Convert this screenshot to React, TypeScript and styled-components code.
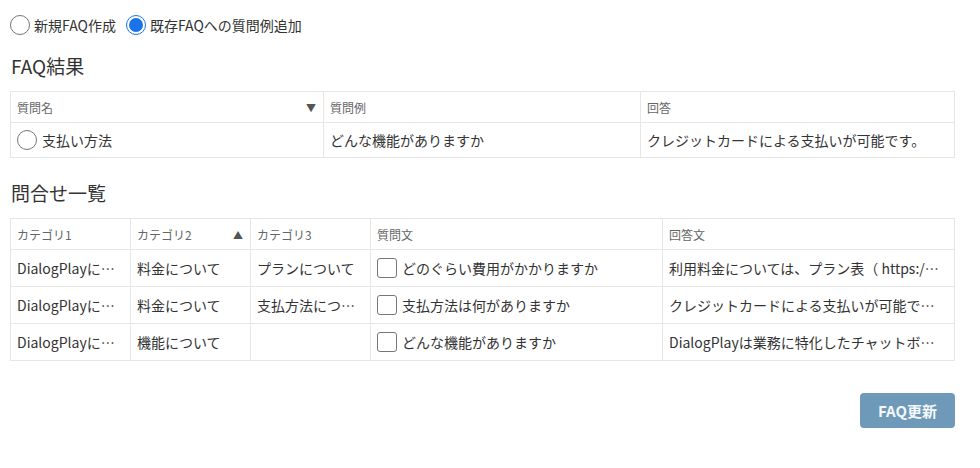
import React from 'react'
import styled, { createGlobalStyle } from 'styled-components'

const GlobalStyle = createGlobalStyle`
  body {
    margin: 0;
    background: #fff;
    font-family: "Noto Sans CJK JP", "Noto Sans", sans-serif;
    color: #333;
  }
`

const Page = styled.div`
  width: 980px;
  padding: 14px 25px 0 10px;
  box-sizing: border-box;
`

const ModeRow = styled.div`
  display: flex;
  align-items: center;
  gap: 10px;
  height: 22px;
`

const ModeOption = styled.label`
  display: flex;
  align-items: center;
  gap: 4px;
  font-size: 14px;
  color: #333;
  cursor: pointer;
`

const Radio = styled.span<{ checked?: boolean }>`
  width: 20px;
  height: 20px;
  border-radius: 50%;
  border: 1px solid ${p => (p.checked ? '#1a73e8' : '#767676')};
  box-sizing: border-box;
  background: #fff;
  display: flex;
  align-items: center;
  justify-content: center;
  flex-shrink: 0;

  ${p => p.checked && `
    &::after {
      content: '';
      width: 14px;
      height: 14px;
      border-radius: 50%;
      background: #1a73e8;
    }
  `}
`

const Heading = styled.h2<{ top: number }>`
  margin: ${p => p.top}px 0 0 1px;
  font-size: 19px;
  font-weight: 400;
  color: #333;
  line-height: 24px;
`

const Table = styled.table<{ top: number }>`
  margin-top: ${p => p.top}px;
  width: 945px;
  border-collapse: collapse;
  table-layout: fixed;
  border: 1px solid #ddd;
`

const HeadCell = styled.th`
  height: 30px;
  padding: 0 7px 0 6px;
  border: 1px solid #e6e6e6;
  font-size: 12px;
  font-weight: 400;
  color: #666;
  text-align: left;
  white-space: nowrap;
`

const HeadInner = styled.div`
  display: flex;
  align-items: center;
  justify-content: space-between;
`

const SortMark = styled.span`
  font-size: 10px;
  color: #555;
`

const Cell = styled.td<{ h: number }>`
  height: ${p => p.h}px;
  padding: 0 10px 0 6px;
  border: 1px solid #e6e6e6;
  font-size: 14px;
  color: #333;
  white-space: nowrap;
  overflow: hidden;
  text-overflow: ellipsis;
`

const CellInner = styled.div`
  display: flex;
  align-items: center;
  gap: 5px;
`

const Checkbox = styled.span`
  width: 20px;
  height: 20px;
  border: 1px solid #777;
  border-radius: 3px;
  box-sizing: border-box;
  background: #fff;
  flex-shrink: 0;
`

const Footer = styled.div`
  display: flex;
  justify-content: flex-end;
  width: 945px;
  margin-top: 32px;
`

const UpdateButton = styled.button`
  width: 95px;
  height: 35px;
  border: none;
  border-radius: 4px;
  background: #6e99b9;
  color: #f4f8fb;
  font-family: "Noto Sans CJK JP", sans-serif;
  font-size: 15px;
  font-weight: 700;
  cursor: pointer;
`

const inquiries = [
  { c1: 'DialogPlayについて', c2: '料金について', c3: 'プランについて', q: 'どのぐらい費用がかかりますか', a: '利用料金については、プラン表（ https://www.dialogplay.jp/price ）をご覧ください。' },
  { c1: 'DialogPlayについて', c2: '料金について', c3: '支払方法について', q: '支払方法は何がありますか', a: 'クレジットカードによる支払いが可能です。' },
  { c1: 'DialogPlayについて', c2: '機能について', c3: '', q: 'どんな機能がありますか', a: 'DialogPlayは業務に特化したチャットボットです。' },
]

const App = () => {
  return <Page>
    <GlobalStyle />
    <ModeRow>
      <ModeOption><Radio />新規FAQ作成</ModeOption>
      <ModeOption><Radio checked />既存FAQへの質問例追加</ModeOption>
    </ModeRow>

    <Heading top={18}>FAQ結果</Heading>
    <Table top={13}>
      <colgroup>
        <col style={{ width: 313 }} />
        <col style={{ width: 317 }} />
        <col />
      </colgroup>
      <thead>
        <tr>
          <HeadCell><HeadInner>質問名<SortMark>▼</SortMark></HeadInner></HeadCell>
          <HeadCell>質問例</HeadCell>
          <HeadCell>回答</HeadCell>
        </tr>
      </thead>
      <tbody>
        <tr>
          <Cell h={34}><CellInner><Radio />支払い方法</CellInner></Cell>
          <Cell h={34}>どんな機能がありますか</Cell>
          <Cell h={34}>クレジットカードによる支払いが可能です。</Cell>
        </tr>
      </tbody>
    </Table>

    <Heading top={23}>問合せ一覧</Heading>
    <Table top={13}>
      <colgroup>
        <col style={{ width: 120 }} />
        <col style={{ width: 120 }} />
        <col style={{ width: 120 }} />
        <col style={{ width: 292 }} />
        <col />
      </colgroup>
      <thead>
        <tr>
          <HeadCell>カテゴリ1</HeadCell>
          <HeadCell><HeadInner>カテゴリ2<SortMark>▲</SortMark></HeadInner></HeadCell>
          <HeadCell>カテゴリ3</HeadCell>
          <HeadCell>質問文</HeadCell>
          <HeadCell>回答文</HeadCell>
        </tr>
      </thead>
      <tbody>
        {inquiries.map((row, i) => (
          <tr key={`inq${i}`}>
            <Cell h={36}>{row.c1}</Cell>
            <Cell h={36}>{row.c2}</Cell>
            <Cell h={36}>{row.c3}</Cell>
            <Cell h={36}><CellInner><Checkbox />{row.q}</CellInner></Cell>
            <Cell h={36}>{row.a}</Cell>
          </tr>
        ))}
      </tbody>
    </Table>

    <Footer>
      <UpdateButton>FAQ更新</UpdateButton>
    </Footer>
  </Page>
}

export default App
